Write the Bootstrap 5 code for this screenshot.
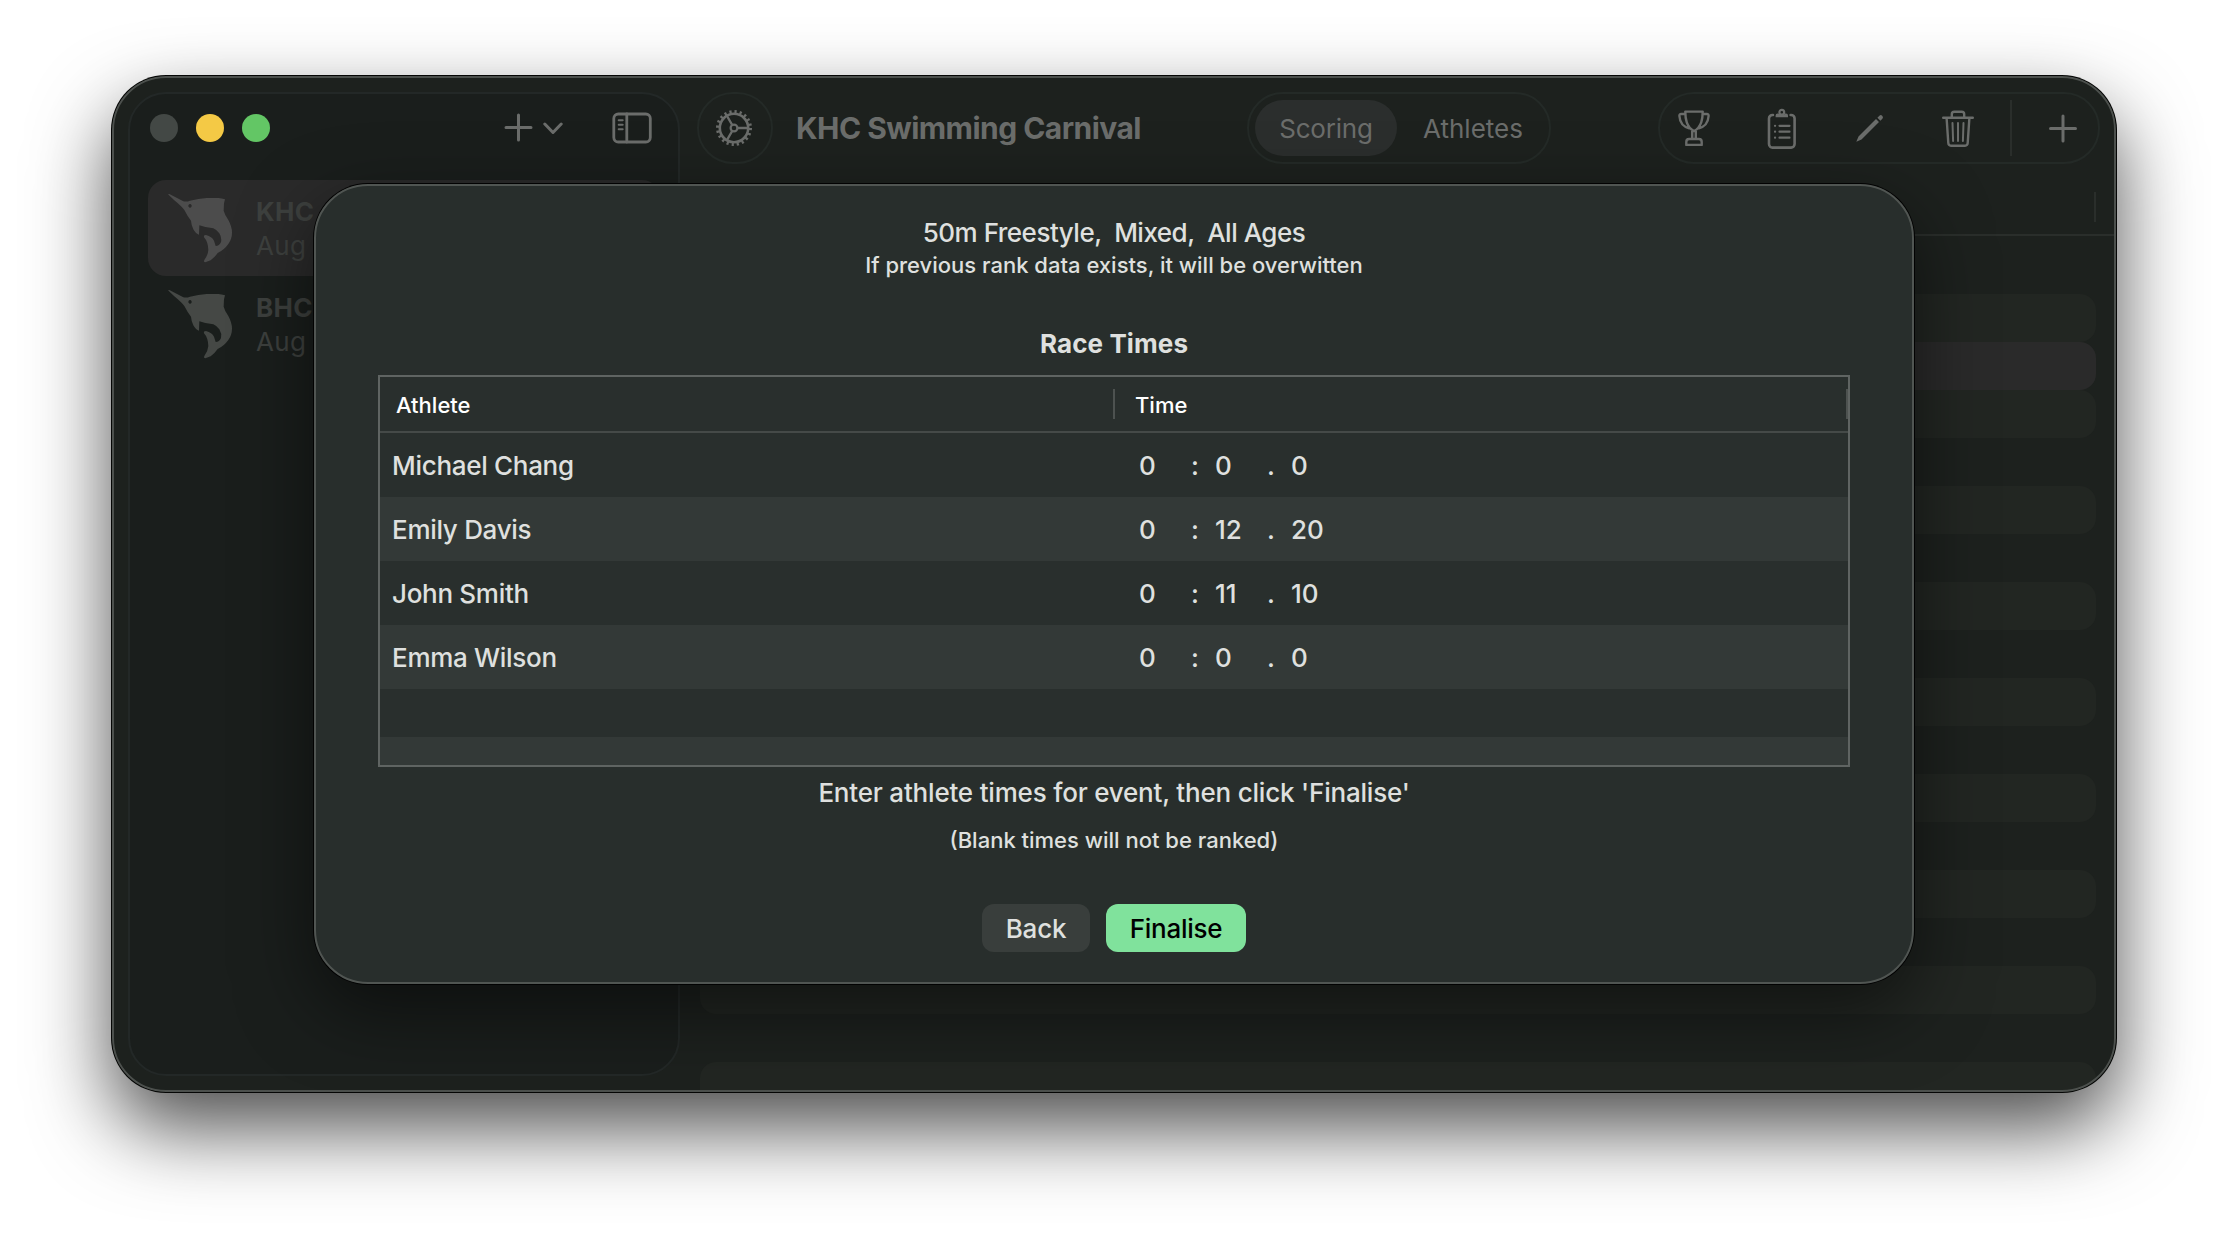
<!DOCTYPE html>
<html lang="en">
<head>
<meta charset="utf-8">
<title>KHC Swimming Carnival</title>
<link rel="stylesheet" href="https://cdn.jsdelivr.net/npm/bootstrap@5.3.0/dist/css/bootstrap.min.css">
<style>
body{margin:0;background:#fff;font-family:Inter,"Liberation Sans",sans-serif;font-size:26px;line-height:32px;color:#dfe0df;width:2228px;height:1240px;overflow:hidden;padding:76px 112px}
.app-window{width:2004px;height:1016px;border-radius:54px;background:#1d211e;box-shadow:0 0 0 1px #050605,0 36px 80px rgba(0,0,0,.7)}
.app-clip{border-radius:54px;overflow:hidden}
.app-clip::after{content:"";position:absolute;inset:0;border:2px solid #4c504d;border-radius:54px;pointer-events:none}
.side-pane{width:552px;margin:16px 0 16px 16px;border:2px solid #232827;border-radius:38px;background:#1a1e1c}
.side-top{height:86px;padding:0 26px 18px 20px}
.dot{width:28px;height:28px;border-radius:50%}
.lights{gap:18px}
.dot-off{background:#434845}.dot-min{background:#f4c945}.dot-max{background:#63c665}
.meet{height:96px;margin:0 18px;padding:0 0 0 18px;border-radius:18px;color:#3d403e;line-height:34px}
.meet.on{background:#2a2a2a}
.meet svg{width:68px;height:72px;color:#454845;margin-right:22px;flex:none}
.meet.on svg{color:#4c4c4c}
.meet-txt{padding-top:2px;letter-spacing:.35px}
.ico{width:40px;height:40px;color:#6b6d6b;flex:none;overflow:visible}
.ico-add{width:64px;margin-right:50px}
.bar{height:72px;margin:16px 16px 0 17px;color:#6b6d6b}
.pill{height:72px;border:2px solid #242a27;border-radius:38px}
.pill-gear{width:76px;padding-right:2px}
.pill-seg{left:1135px;width:304px;padding:1px 0 0 6px}
.pill-tools{width:442px;padding-left:14px}
.pill-tools .ico:not(:last-child){margin-right:48px}
.pill-tools .ico:nth-last-child(3){margin-right:32px!important}
.app-title{font-size:30px;letter-spacing:-.54px;margin-left:23px}
.seg-on{width:142px;height:56px;border-radius:28px;background:#2b2e2d;letter-spacing:-.2px;margin-top:-1px;padding-top:2px}
.seg-off{width:152px}
.vline{width:2px;background:#2a2e2b}
.vline-tall{height:56px;margin-right:31px}
.col-head{height:72px;border-bottom:2px solid #2a2e2b;padding:28px 20px 12px 0}
.stripes{padding:10px 20px 0}
.stripes div{height:48px;border-radius:16px}
.stripes div:nth-child(even){background:#222622}
.stripes div.sel{background:#2a2a2a}
.sheet{left:202px;top:108px;width:1600px;height:800px;border-radius:54px;background:#282e2c;box-shadow:0 0 0 1px #020202,0 26px 74px rgba(0,0,0,.52);border:2px solid #505552;padding-top:31px;z-index:3;font-weight:450}
.event-line{white-space:pre;letter-spacing:-.5px}
.sm-t{font-size:22px;font-weight:500}
.race-h{margin-top:47px;letter-spacing:.1px}
.grid-box{width:1472px;height:392px;border:2px solid #5f6462;margin-top:15px;background:#292f2d}
.grid-head{height:56px;border-bottom:2px solid #454a48;color:#fff;font-size:22px;font-weight:500;padding:12px 0}
.grid-head .c1{width:733px;padding-left:16px}
.grid-head .c2{width:731px;padding-left:20px}
.gl{width:2px;background:#4d5250}
.r{height:64px;padding:2px 0 0 12px}
.r.alt{background:#333937}
.r .n{width:747px;letter-spacing:-.3px}
.r .d{width:52px}.r .s{width:24px}
.r-empty{height:48px}
.hint{margin-top:10px;letter-spacing:-.2px}
.hint2{margin-top:15px}
.acts{gap:16px;margin-top:48px}
.btn-x{height:48px;border-radius:12px;font-size:26px;font-weight:450;padding:1px 0 0;border:0;line-height:48px;color:#dfe0df;background:#393e3c;width:108px;letter-spacing:-.25px}
.btn-go{background:#80e29c;color:#000;width:140px}
</style>
<script src="https://cdn.jsdelivr.net/npm/bootstrap@5.3.0/dist/js/bootstrap.bundle.min.js"></script>
</head>
<body>
<svg width="0" height="0" class="position-absolute"><symbol id="fish" viewBox="48 66 204 216"><path fill="currentColor" fill-rule="evenodd" d="M54 73L58 72L100 94Q110 96 120 92Q145 86 170 84L205 84Q215 85 225 88L222 100L221 122Q224 134 235 150Q246 170 246 188Q246 206 235 222Q222 240 203 249Q194 262 182 271L166 277Q160 276 163 270Q174 255 175 240Q174 215 162 202Q160 195 168 195Q186 200 192 212L197 228Q208 228 213 216Q216 203 208 190Q198 178 190 175Q170 174 148 166L147 194Q138 192 130 178Q124 166 123 152Q112 138 103 120Q96 110 72 90ZM120 102a5 5.500 0 1 0 .1 0Z"/></symbol></svg>
<div class="app-window position-relative">
 <div class="app-clip position-relative d-flex h-100">
  <aside class="side-pane flex-shrink-0">
   <div class="side-top d-flex align-items-center">
    <div class="lights d-flex me-auto"><span class="dot dot-off"></span><span class="dot dot-min"></span><span class="dot dot-max"></span></div>
    <svg class="ico ico-add" viewBox="0 0 64 40" fill="none" stroke="currentColor" stroke-width="3" stroke-linecap="round" stroke-linejoin="round"><path d="M8 19.500h25M20.500 7v25M46.800 16l8.200 8.500L63.200 16"/></svg>
    <svg class="ico" viewBox="0 0 40 40" fill="none" stroke="currentColor" stroke-width="2.800" stroke-linecap="round"><rect x="1.800" y="6" width="36.500" height="28" rx="4.500"/><path d="M14.800 6v28"/><path stroke-width="2" d="M6.700 12.300h4M6.700 16.800h4M6.700 21.300h4"/></svg>
   </div>
   <div class="meet on d-flex align-items-center"><svg><use href="#fish"/></svg><div class="meet-txt"><div class="fw-bold">KHC</div><div>Aug 2</div></div></div>
   <div class="meet d-flex align-items-center"><svg><use href="#fish"/></svg><div class="meet-txt"><div class="fw-bold">BHC</div><div>Aug 2</div></div></div>
  </aside>
  <main class="flex-grow-1">
   <div class="bar d-flex align-items-center">
    <div class="pill pill-gear d-flex align-items-center justify-content-center"><svg class="ico" viewBox="0 0 40 40" fill="none" stroke="currentColor"><circle cx="20" cy="20" r="14.200" stroke-width="2.600"/><circle cx="20" cy="20" r="16.300" stroke-width="3.400" stroke-dasharray="2.200 2.921"/><circle cx="20" cy="20" r="3.400" stroke-width="2.200"/><path stroke-width="2.400" d="M23.500 20H34M18.200 17L13 8M18.200 23L13 32"/></svg></div>
    <div class="app-title fw-bold">KHC Swimming Carnival</div>
    <div class="pill pill-seg d-flex align-items-center position-absolute"><div class="seg-on d-flex align-items-center justify-content-center">Scoring</div><div class="seg-off text-center">Athletes</div></div>
    <div class="pill pill-tools d-flex align-items-center ms-auto">
     <svg class="ico" viewBox="0 0 40 40" fill="none" stroke="currentColor" stroke-width="2.400" stroke-linejoin="round"><path d="M11.300 3.600h17.400c0 5-.2 7-1.400 10.500-1.300 4-3.800 7.200-7.300 9-3.500-1.800-6-5-7.300-9-1.200-3.500-1.400-5.500-1.400-10.500zM11.300 6H7.200c-1.300 0-1.900.6-1.800 2 .4 6.200 4 11 10.300 12.500M28.700 6h4.100c1.300 0 1.900.6 1.800 2-.4 6.200-4 11-10.300 12.500M18.200 23v8M21.800 23v8M12.300 36.900v-3c0-1.800 1-2.900 2.800-2.900h9.800c1.800 0 2.800 1.100 2.800 2.900v3z"/></svg>
     <svg class="ico" viewBox="0 0 40 40" fill="none" stroke="currentColor" stroke-width="2.600" stroke-linecap="round"><path d="M11 7h-.5a3.500 3.500 0 0 0-3.500 3.500v25.600a3.500 3.500 0 0 0 3.500 3.500h18.600a3.500 3.500 0 0 0 3.500-3.500V10.500a3.500 3.500 0 0 0-3.500-3.500h-.5"/><circle cx="19.800" cy="4.200" r="2.400" stroke-width="2.200"/><path d="M13.600 9.300V7.500q0-2 2-2h1l1 1.500h4.400l1-1.500h1q2 0 2 2v1.800z" fill="currentColor" stroke="none"/><path stroke-width="2.200" d="M17.500 17.800h10M17.500 23.700h10M17.500 29.700h10M13 17.800h.1M13 23.700h.1M13 29.700h.1"/></svg>
     <svg class="ico" viewBox="0 0 40 40" fill="currentColor"><path d="M6.300 33.800l2.200-5.300L26 11l3 3L11.500 31.500zM27.400 9.700l2-2q1.300-1.200 2.800.1t.2 2.900l-2 2z"/></svg>
     <svg class="ico" viewBox="0 0 40 40" fill="none" stroke="currentColor" stroke-width="2.400" stroke-linecap="round" stroke-linejoin="round"><path d="M5.200 9.700h29.600M13.800 9.500V6.300q0-2.500 2.500-2.500h7.400q2.500 0 2.500 2.500v3.200M8.600 10l1.700 25q.2 2.700 2.700 2.700h14q2.500 0 2.700-2.700l1.700-25"/><path stroke-width="2" d="M14.500 15l.6 18M20 15v18M25.500 15l-.6 18"/></svg>
     <span class="vline vline-tall"></span>
     <svg class="ico" viewBox="0 0 40 40" fill="none" stroke="currentColor" stroke-width="3" stroke-linecap="round"><path d="M7.500 20.500h25M20 8v25"/></svg>
    </div>
   </div>
   <div class="col-head d-flex justify-content-end"><span class="vline"></span></div>
   <div class="stripes"><div></div><div></div><div class="sel"></div><div></div><div></div><div></div><div></div><div></div><div></div><div></div><div></div><div></div><div></div><div></div><div></div><div></div><div></div><div></div></div>
  </main>
 </div>
 <section class="sheet position-absolute d-flex flex-column align-items-center" role="dialog">
  <div class="event-line">50m Freestyle,  Mixed,  All Ages</div>
  <div class="sm-t">If previous rank data exists, it will be overwitten</div>
  <div class="race-h fw-bold">Race Times</div>
  <div class="grid-box overflow-hidden">
   <div class="grid-head d-flex"><div class="c1">Athlete</div><span class="gl"></span><div class="c2">Time</div><span class="gl"></span></div>
   <div class="r d-flex align-items-center"><div class="n">Michael Chang</div><span class="d">0</span><span class="s">:</span><span class="d">0</span><span class="s">.</span><span>0</span></div>
   <div class="r alt d-flex align-items-center"><div class="n">Emily Davis</div><span class="d">0</span><span class="s">:</span><span class="d">12</span><span class="s">.</span><span>20</span></div>
   <div class="r d-flex align-items-center"><div class="n">John Smith</div><span class="d">0</span><span class="s">:</span><span class="d">11</span><span class="s">.</span><span>10</span></div>
   <div class="r alt d-flex align-items-center"><div class="n">Emma Wilson</div><span class="d">0</span><span class="s">:</span><span class="d">0</span><span class="s">.</span><span>0</span></div>
   <div class="r-empty"></div><div class="r alt"></div>
  </div>
  <div class="hint">Enter athlete times for event, then click 'Finalise'</div>
  <div class="hint2 sm-t">(Blank times will not be ranked)</div>
  <div class="acts d-flex"><button class="btn btn-x">Back</button><button class="btn btn-x btn-go">Finalise</button></div>
 </section>
</div>
</body>
</html>
